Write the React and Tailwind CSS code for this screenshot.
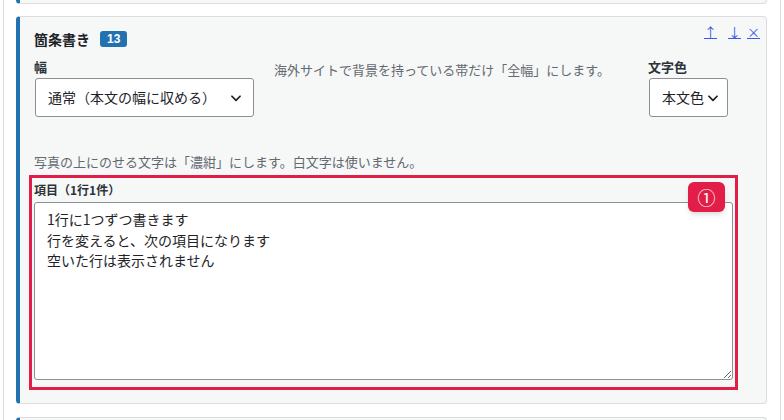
import React from 'react'

const font = { fontFamily: '"Noto Sans CJK JP", "Noto Sans", sans-serif' }

const Chevron = ({ className = '' }) => (
  <svg viewBox="0 0 24 24" className={className} fill="none" stroke="#1d2327" strokeWidth="3" strokeLinecap="round" strokeLinejoin="round">
    <path d="M5 9l7 7 7-7" />
  </svg>
)

const App = () => {
  return (
    <div className="w-[784px] h-[420px] overflow-hidden bg-white" style={font}>
      <div className="ml-[3px] w-[778px] h-full border-x border-[#dcdcde] pl-[12px] pr-[12px]">
        {/* previous block (tail) */}
        <div className="h-[4px] w-[751px] border-l-4 border-r border-b border-l-[#2271b1] border-r-[#dcdcde] border-b-[#dcdcde] rounded-b-[4px] bg-[#f6f7f7]"></div>

        {/* current block */}
        <div className="mt-[12px] w-[751px] h-[388px] border-l-4 border-y border-r border-l-[#2271b1] border-y-[#dcdcde] border-r-[#dcdcde] rounded-[4px] bg-[#f6f7f7] pl-[14px] pr-[12px]">
          <div className="flex items-start justify-between pt-[12px]">
            <div className="flex items-center gap-[10px] h-[20px]">
              <span className="text-[14px] font-bold text-[#1d2327] leading-[20px]">箇条書き</span>
              <span className="bg-[#2271b1] text-white text-[12px] font-bold rounded-[3px] px-[7px] h-[16px] leading-[16px]" style={{ fontFamily: '"Liberation Sans", sans-serif' }}>13</span>
            </div>
            <div className="flex items-center text-[13px] text-[#3858e9] leading-[16px] -mt-[5px] mr-[-7px]">
              <a className="underline px-[1px]">↑</a>
              <a className="underline px-[1px] ml-[9px]">↓</a>
              <a className="underline px-[1px] ml-[4px]">×</a>
            </div>
          </div>

          <div className="flex mt-[9px]">
            <div className="flex flex-col">
              <span className="text-[13px] font-bold text-[#2c3338] leading-[18px]">幅</span>
              <div className="mt-[2px] ml-[1px] w-[219px] h-[39px] bg-white border border-[#8c8f94] rounded-[3px] flex items-center justify-between pl-[12px] pr-[10px]">
                <span className="text-[14px] text-[#1d2327]">通常（本文の幅に収める）</span>
                <Chevron className="w-[14px] h-[14px]" />
              </div>
            </div>
            <p className="ml-[20px] mt-[3px] text-[13px] leading-[18px] text-[#646970] flex-1">海外サイトで背景を持っている帯だけ「全幅」にします。</p>
            <div className="flex flex-col mr-[26px]">
              <span className="text-[13px] font-bold text-[#2c3338] leading-[18px]">文字色</span>
              <div className="mt-[2px] ml-[1px] w-[79px] h-[39px] bg-white border border-[#8c8f94] rounded-[3px] flex items-center pl-[12px] gap-[2px]">
                <span className="text-[14px] text-[#1d2327]">本文色</span>
                <Chevron className="w-[14px] h-[14px]" />
              </div>
            </div>
          </div>

          <p className="mt-[36px] text-[13px] leading-[18px] text-[#646970]">写真の上にのせる文字は「濃紺」にします。白文字は使いません。</p>

          <div className="relative mt-[4px] -ml-[5px] w-[709px] border-[3px] border-[#e21d48] pl-[2px] pr-[2px] pt-[3px] pb-[7px]">
            <span className="block text-[12px] font-bold text-[#2c3338] leading-[18px]">項目（1行1件）</span>
            <textarea
              className="block mt-[3px] w-[699px] h-[178px] bg-white border border-[#8c8f94] rounded-[3px] px-[12px] py-[6px] text-[14px] leading-[20.5px] text-[#1d2327] outline-none"
              style={font}
              defaultValue={'1行に1つずつ書きます\n行を変えると、次の項目になります\n空いた行は表示されません'}
            />
            <div className="absolute top-[4px] right-[10px] w-[37px] h-[30px] bg-[#e21d48] rounded-[6px] shadow-md flex items-center justify-center text-white text-[18px]">①</div>
          </div>
        </div>

        {/* next block (head) */}
        <div className="mt-[13px] w-[751px] h-[10px] border-l-4 border-t border-r border-l-[#2271b1] border-t-[#dcdcde] border-r-[#dcdcde] rounded-t-[4px] bg-[#f6f7f7]"></div>
      </div>
    </div>
  )
}

export default App
